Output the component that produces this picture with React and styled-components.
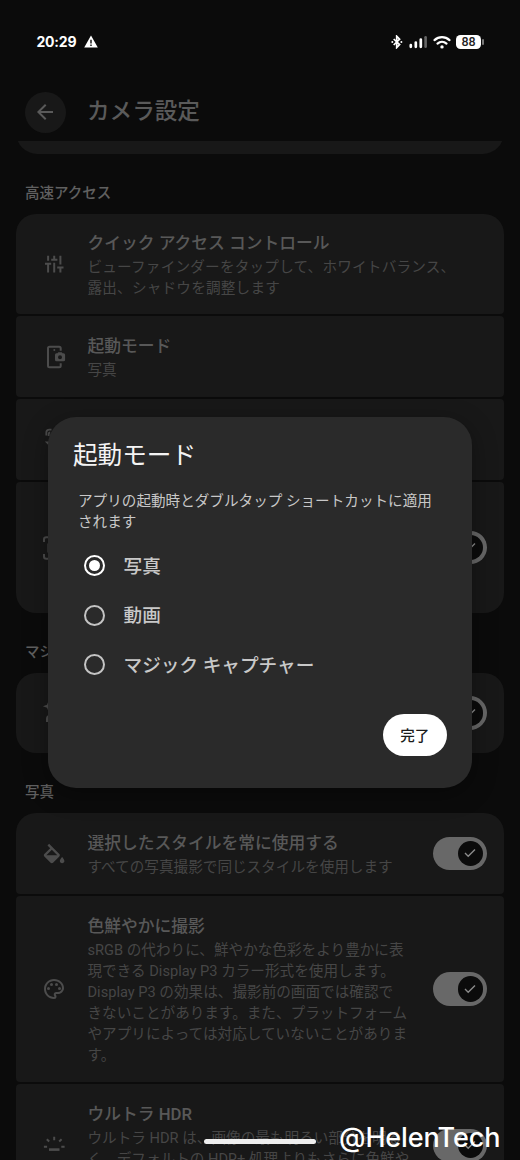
import styled, { createGlobalStyle, css } from "styled-components";
import { MdArrowBack, MdOutlinePalette } from "react-icons/md";

const GlobalStyle = createGlobalStyle`
  * {
    box-sizing: border-box;
  }

  body {
    margin: 0;
    background: #0b0b0b;
    font-family: Roboto, "Noto Sans CJK JP", sans-serif;
  }
`;

const Screen = styled.div`
  position: relative;
  display: flex;
  flex-direction: column;
  width: 520px;
  height: 1160px;
  overflow: hidden;
  background-color: #0b0b0b;
  white-space: nowrap;
`;

const StatusBar = styled.div`
  flex: none;
  display: flex;
  align-items: center;
  justify-content: space-between;
  height: 83px;
  padding: 0 36.5px;
  color: white;
`;

const StatusGroup = styled.div`
  display: flex;
  align-items: center;
`;

const Time = styled.span`
  font-family: Inter, sans-serif;
  font-weight: 700;
  font-size: 14px;
  line-height: 20px;
  letter-spacing: -0.2px;
  margin-right: 8px;
`;

const SignalSlot = styled.div`
  display: flex;
  margin: 0 6px;
`;

const Battery = styled.div`
  display: flex;
  align-items: center;
  justify-content: center;
  width: 25px;
  height: 14px;
  margin-left: 5.5px;
  border-radius: 4.5px;
  background-color: white;
  color: #222;
  font-size: 12.5px;
  font-weight: 500;
`;

const BatteryTip = styled.div`
  width: 1.5px;
  height: 6px;
  margin-left: 1px;
  border-radius: 1px;
  background-color: #777;
`;

const Header = styled.header`
  flex: none;
  display: flex;
  align-items: center;
  height: 58px;
  padding: 0 25px;
`;

const BackButton = styled.button`
  display: flex;
  align-items: center;
  justify-content: center;
  width: 41px;
  height: 41px;
  padding: 0 1.5px 0 0;
  border: none;
  border-radius: 50%;
  background-color: #181818;
  color: #5a5a5a;
`;

const PageTitle = styled.h1`
  margin: 0 0 1px 21px;
  color: #5a5a5a;
  font-size: 22.6px;
  font-weight: 500;
  line-height: 32px;
`;

const List = styled.main`
  flex: none;
  height: 1019px;
  overflow: hidden;
  padding: 0 16px;
`;

const ScrollClip = styled.div`
  height: 13px;
  overflow: hidden;
`;

const PreviousCard = styled.div`
  height: 43px;
  margin-top: -30px;
  border-radius: 22px;
  background-color: #181818;
`;

const SectionTitle = styled.h2`
  display: flex;
  align-items: center;
  height: 60px;
  margin: 0;
  padding: 19px 9px 0;
  color: #606060;
  font-size: 14.5px;
  font-weight: 500;
  line-height: 20px;
`;

const Group = styled.section`
  display: flex;
  flex-direction: column;
  gap: 2px;
`;

const Card = styled.div`
  display: flex;
  align-items: center;
  height: ${({ $height }) => $height}px;
  padding: 0 17px 0 26px;
  border-radius: 4px;
  background-color: #181818;

  &:first-child {
    border-top-left-radius: 20px;
    border-top-right-radius: 20px;
  }

  ${({ $last }) =>
    $last &&
    css`
      border-bottom-left-radius: 20px;
      border-bottom-right-radius: 20px;
    `}
`;

const IconBox = styled.div`
  flex: none;
  display: flex;
  width: 24px;
  height: 24px;
  margin-right: 21.5px;
  color: #4c4c4c;
`;

const CardText = styled.div`
  flex: 1;
  min-width: 0;
  padding-top: 3px;
`;

const CardTitle = styled.h3`
  margin: 0 0 1px;
  color: #585858;
  font-size: 16.75px;
  font-weight: 500;
  line-height: 23.8px;
`;

const CardBody = styled.p`
  margin: 0;
  color: #464646;
  font-size: 14.62px;
  line-height: 21px;
  letter-spacing: ${({ $spacing }) => $spacing || 0}px;
`;

const Track = styled.div`
  flex: none;
  display: flex;
  align-items: center;
  justify-content: flex-end;
  width: 54px;
  height: 33.4px;
  padding-right: 4px;
  border-radius: 17px;
  background-color: #686868;
`;

const Thumb = styled.div`
  display: flex;
  align-items: center;
  justify-content: center;
  width: 25.4px;
  height: 25.4px;
  border-radius: 50%;
  background-color: #0b0b0b;
`;

const Dialog = styled.div`
  position: absolute;
  top: 417px;
  left: 48px;
  display: flex;
  flex-direction: column;
  width: 424px;
  height: 371px;
  padding: 21px 25.5px 32.5px 25px;
  border-radius: 28px;
  background-color: #2a2a2a;
  box-shadow: 0 6px 24px rgba(0, 0, 0, 0.35);
`;

const DialogTitle = styled.h2`
  margin: 0;
  color: #f4f4f4;
  font-size: 24.6px;
  font-weight: 400;
  line-height: 35px;
`;

const DialogBody = styled.p`
  margin: 18px 0 0 5px;
  color: #c8c8c8;
  font-size: 14.6px;
  line-height: 21px;
`;

const Options = styled.div`
  display: flex;
  flex-direction: column;
  margin-top: 8px;
`;

const Option = styled.label`
  display: flex;
  align-items: center;
  height: 49.5px;
  padding-left: 10.5px;
`;

const OptionLabel = styled.span`
  padding-top: 2px;
  color: #c8c8c8;
  font-size: 18.65px;
  font-weight: 500;
  line-height: 26px;
`;

const Radio = styled.span`
  display: flex;
  align-items: center;
  justify-content: center;
  width: 21px;
  height: 21px;
  margin-right: 19px;
  border: 2px solid ${({ $checked }) => ($checked ? "#fff" : "#c4c4c4")};
  border-radius: 50%;

  &::after {
    content: "";
    width: 11px;
    height: 11px;
    border-radius: 50%;
    background-color: ${({ $checked }) => ($checked ? "#fff" : "transparent")};
  }
`;

const DoneButton = styled.button`
  display: flex;
  align-items: center;
  justify-content: center;
  align-self: flex-end;
  width: 63.5px;
  height: 41.5px;
  margin-top: auto;
  padding: 0;
  border: none;
  border-radius: 21px;
  background-color: white;
  color: #1c1c1c;
  font-family: inherit;
  font-size: 14.6px;
  font-weight: 500;
`;

const HomeBar = styled.div`
  position: absolute;
  left: 204px;
  top: 1139px;
  width: 112px;
  height: 4.5px;
  border-radius: 3px;
  background-color: #eee;
`;

const Watermark = styled.div`
  position: absolute;
  left: 339px;
  top: 1121px;
  color: white;
  font-family: Inter, sans-serif;
  font-size: 27px;
  font-weight: 500;
  line-height: 34px;
  letter-spacing: -0.15px;
`;

const WarningIcon = () => (
  <svg width="14" height="13" viewBox="0 0 14 13">
    <path d="M7 .4 13.8 12.6H.2Z" fill="#fff" />
    <path d="M7 4.8v3.6M7 9.6v1.5" stroke="#0b0b0b" strokeWidth="1.4" />
  </svg>
);

const BluetoothIcon = () => (
  <svg width="12" height="14" viewBox="0 0 12 14">
    <path
      d="M2.7 4 8.6 9.6 5.7 12.6V1.2l2.9 3L2.7 10"
      fill="none"
      stroke="#fff"
      strokeWidth="1.7"
    />
    <circle cx="1.3" cy="7" r="1" fill="#fff" />
    <circle cx="10.4" cy="7" r="1" fill="#fff" />
  </svg>
);

const SignalIcon = () => (
  <svg width="18" height="14" viewBox="0 0 18 14" strokeLinecap="round">
    <path
      d="M1.8 10.2v1.6M6.8 7.5v4.3M11.8 4.5v7.3"
      stroke="#fff"
      strokeWidth="2.7"
    />
    <path d="M16.6 2.3v9.5" stroke="#666" strokeWidth="2.6" />
  </svg>
);

const WifiIcon = () => (
  <svg width="18" height="14" viewBox="0 0 18 14">
    <path
      d="M1.5 5.1a11.2 11.2 0 0 1 15 0M4.5 8.6a6.8 6.8 0 0 1 9 0"
      fill="none"
      stroke="#fff"
      strokeWidth="2.2"
      strokeLinecap="round"
    />
    <circle cx="9" cy="11.9" r="1.7" fill="#fff" />
  </svg>
);

const MixIcon = () => (
  <svg width="24" height="24" viewBox="0 0 24 24">
    <path
      d="M6.1 3.7v5M3 11.7h6.2M6.1 11.7v8.8M12.2 3.7v3.9M9.2 7.7h6.2M12.2 10.8v9.7M18.4 3.7v8.9M15.2 15.6h6.3M18.4 15.6v4.9"
      fill="none"
      stroke="currentColor"
      strokeWidth="2"
    />
  </svg>
);

const PhoneCameraIcon = () => (
  <svg width="24" height="24" viewBox="0 0 24 24">
    <path
      d="M18.7 5.7V3.2Q18.7 1.7 17.2 1.7H7.5Q6 1.7 6 3.2v17.6q0 1.5 1.5 1.5h9.7q1.5 0 1.5-1.5v-2.5"
      fill="none"
      stroke="currentColor"
      strokeWidth="2"
    />
    <circle cx="12.3" cy="4.9" r="1" fill="currentColor" />
    <path
      fill="currentColor"
      fillRule="evenodd"
      d="M15.5 8.2 16.2 7.2h3.6l.7 1h1q1.6 0 1.6 1.5v5q0 1.5-1.6 1.5h-7q-1.5 0-1.5-1.5v-5q0-1.5 1.5-1.5ZM18 10.2a2 2 0 1 0 0 4 2 2 0 0 0 0-4Z"
    />
  </svg>
);

const RotateIcon = () => (
  <svg width="24" height="24" viewBox="0 0 24 24">
    <path
      d="M4.3 7.5V5Q4.3 1.7 7.5 1.7h2M6.7 8V6q0-1.5 1.5-1.5"
      fill="none"
      stroke="currentColor"
      strokeWidth="1.8"
    />
    <path d="M2.8 13.5h5v5Z" fill="currentColor" />
  </svg>
);

const FrameIcon = () => (
  <svg width="24" height="24" viewBox="0 0 24 24">
    <path
      d="M2 6V3.5Q2 1.2 4.3 1.2H6M2 18v2.5q0 2.3 2.3 2.3H6M6.5 7.5v9"
      fill="none"
      stroke="currentColor"
      strokeWidth="2"
    />
  </svg>
);

const SparkIcon = () => (
  <svg width="24" height="24" viewBox="0 0 24 24" fill="currentColor">
    <path d="M6.5 0 8 3.7 11.5 5.2 8 6.7 6.5 10.5 5 6.7.9 5.2 5 3.7ZM4 21v-3q0-3.5 3-4v7Z" />
  </svg>
);

const PaintIcon = () => (
  <svg width="24" height="24" viewBox="1.4 -1.6 21 21" fill="currentColor">
    <path d="M16.56 8.94 7.62 0 6.21 1.41l2.38 2.38-5.15 5.15c-.59.59-.59 1.54 0 2.12l5.5 5.5c.29.29.68.44 1.06.44s.77-.15 1.06-.44l5.5-5.5c.59-.58.59-1.53 0-2.12zM5.21 10 10 5.21 14.79 10H5.21zM19 11.5s-2 2.17-2 3.5c0 1.1.9 2 2 2s2-.9 2-2c0-1.33-2-3.5-2-3.5z" />
  </svg>
);

const HdrIcon = () => (
  <svg width="24" height="24" viewBox="0 0 24 24" stroke="currentColor">
    <path
      d="M12.2 2.8v3.4M4.8 5.2l2.4 2.3M19.6 5.2l-2.4 2.3M1.9 12.7h3.2M19.3 12.7h3.3"
      strokeWidth="2"
    />
    <path d="M7 15.6h10.5" strokeWidth="2.6" />
  </svg>
);

const Toggle = () => (
  <Track>
    <Thumb>
      <svg width="14" height="12" viewBox="0 0 14 12">
        <path
          d="M2 6.1 5.2 9.2 12 2.4"
          fill="none"
          stroke="#8a8a8a"
          strokeWidth="1.4"
        />
      </svg>
    </Thumb>
  </Track>
);

const SettingCard = ({
  icon,
  title,
  lines = [],
  spacing,
  toggle,
  height,
  last,
}) => (
  <Card $height={height} $last={last}>
    <IconBox>{icon}</IconBox>
    <CardText>
      {title && <CardTitle>{title}</CardTitle>}
      {lines.map((line) => (
        <CardBody key={line} $spacing={spacing}>
          {line}
        </CardBody>
      ))}
    </CardText>
    {toggle && <Toggle />}
  </Card>
);

const modes = ["写真", "動画", "マジック キャプチャー"];

const App = () => {
  return (
    <Screen lang="ja">
      <GlobalStyle />
      <StatusBar>
        <StatusGroup>
          <Time>20:29</Time>
          <WarningIcon />
        </StatusGroup>
        <StatusGroup>
          <BluetoothIcon />
          <SignalSlot>
            <SignalIcon />
          </SignalSlot>
          <WifiIcon />
          <Battery>88</Battery>
          <BatteryTip />
        </StatusGroup>
      </StatusBar>

      <Header>
        <BackButton>
          <MdArrowBack size={24} />
        </BackButton>
        <PageTitle>カメラ設定</PageTitle>
      </Header>

      <List>
        <ScrollClip>
          <PreviousCard />
        </ScrollClip>
        <SectionTitle>高速アクセス</SectionTitle>
        <Group>
          <SettingCard
            icon={<MixIcon />}
            title="クイック アクセス コントロール"
            lines={[
              "ビューファインダーをタップして、ホワイトバランス、",
              "露出、シャドウを調整します",
            ]}
            spacing={0.2}
            height={100}
          />
          <SettingCard
            icon={<PhoneCameraIcon />}
            title="起動モード"
            lines={["写真"]}
            height={81}
          />
          <SettingCard icon={<RotateIcon />} height={81} />
          <SettingCard icon={<FrameIcon />} height={131} toggle last />
        </Group>

        <SectionTitle>マジック</SectionTitle>
        <Group>
          <SettingCard icon={<SparkIcon />} height={80} toggle last />
        </Group>

        <SectionTitle>写真</SectionTitle>
        <Group>
          <SettingCard
            icon={<PaintIcon />}
            title="選択したスタイルを常に使用する"
            lines={["すべての写真撮影で同じスタイルを使用します"]}
            height={81}
            toggle
          />
          <SettingCard
            icon={<MdOutlinePalette size={24} />}
            title="色鮮やかに撮影"
            lines={[
              "sRGB の代わりに、鮮やかな色彩をより豊かに表",
              "現できる Display P3 カラー形式を使用します。",
              "Display P3 の効果は、撮影前の画面では確認で",
              "きないことがあります。また、プラットフォーム",
              "やアプリによっては対応していないことがありま",
              "す。",
            ]}
            height={186}
            toggle
          />
          <SettingCard
            icon={<HdrIcon />}
            title="ウルトラ HDR"
            lines={[
              "ウルトラ HDR は、画像の最も明るい部分を明る",
              "く、デフォルトの HDR+ 処理よりもさらに色鮮や",
              "かにします。",
            ]}
            height={123}
            toggle
          />
        </Group>
      </List>

      <Dialog role="dialog">
        <DialogTitle>起動モード</DialogTitle>
        <DialogBody>
          アプリの起動時とダブルタップ ショートカットに適用
          <br />
          されます
        </DialogBody>
        <Options>
          {modes.map((mode, index) => (
            <Option key={mode}>
              <Radio $checked={index === 0} />
              <OptionLabel>{mode}</OptionLabel>
            </Option>
          ))}
        </Options>
        <DoneButton>完了</DoneButton>
      </Dialog>

      <HomeBar />
      <Watermark>@HelenTech</Watermark>
    </Screen>
  );
};

export default App;
